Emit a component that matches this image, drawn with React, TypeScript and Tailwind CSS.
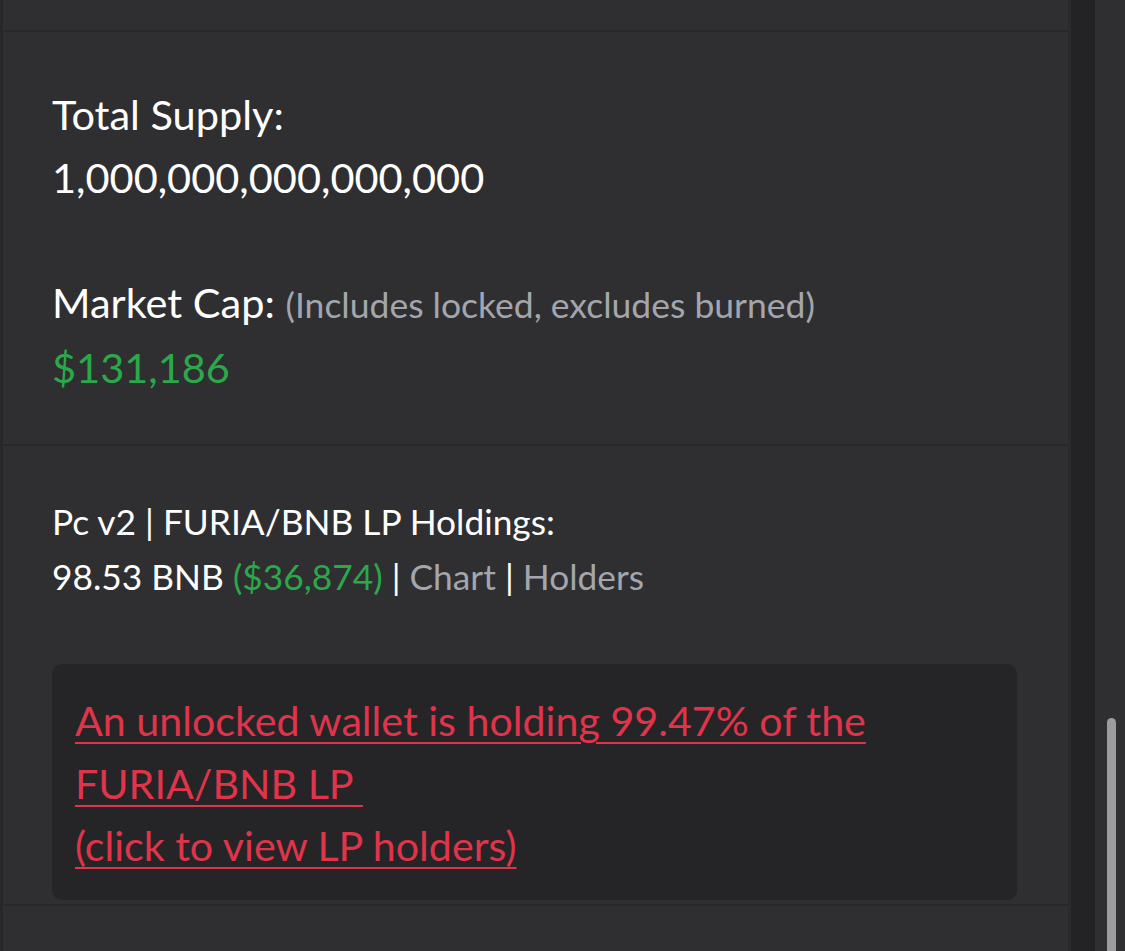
export default function App() {
  return (
    <div
      className="flex h-[951px] w-[1125px] overflow-hidden bg-[#2f2f31]"
      style={{ fontFamily: 'Lato, "Noto Sans", sans-serif' }}
    >
      {/* main column */}
      <div className="flex w-[1068px] flex-col border-l-[3px] border-[#27272a]">
        <div className="h-[32px] shrink-0 border-b-2 border-[#27272a]" />

        {/* supply + market cap */}
        <div className="shrink-0 border-b-2 border-[#27272a] px-[49px] pt-[51px] pb-[45px]">
          <div className="text-[41.5px] leading-[63px] text-white">Total Supply:</div>
          <div className="text-[41.5px] leading-[63px] text-white">1,000,000,000,000,000</div>
          <div className="mt-[62px] text-[41.5px] leading-[63px] text-white">
            Market Cap:{' '}
            <span className="text-[35.5px] text-[#a3a6ad]">(Includes locked, excludes burned)</span>
          </div>
          <div className="text-[41.5px] leading-[63px] text-[#2aa84a]">$131,186</div>
        </div>

        {/* LP holdings */}
        <div className="shrink-0 border-b-2 border-[#27272a] px-[49px] pt-[48px] pb-[4px]">
          <div className="text-[35.3px] leading-[55px] text-white">Pc v2 | FURIA/BNB LP Holdings:</div>
          <div className="text-[35.3px] leading-[55px] text-white">
            98.53 BNB <span className="text-[#2aa84a]">($36,874)</span> |{' '}
            <span className="text-[#a3a6ad]">Chart</span> |{' '}
            <span className="text-[#a3a6ad]">Holders</span>
          </div>
          <div className="mt-[60px] mr-[2px] rounded-[10px] bg-[#252527] px-[23px] pt-[25px] pb-[23px]">
            <a className="text-[41.2px] leading-[62.5px] text-[#e0344b] underline decoration-2 underline-offset-[6px]">
              An unlocked wallet is holding 99.47% of the
              <br />
              FURIA/BNB LP&nbsp;
              <br />
              (click to view LP holders)
            </a>
          </div>
        </div>
        <div className="flex-1" />
      </div>

      {/* side strip */}
      <div className="w-[27px] shrink-0 border-l-[3px] border-[#2a2a2c] bg-[#232325]" />

      {/* scrollbar */}
      <div className="flex flex-1 justify-center pt-[718px] pl-[2px]">
        <div className="h-[260px] w-[9px] rounded-full bg-[#9c9c9e]" />
      </div>
    </div>
  );
}
